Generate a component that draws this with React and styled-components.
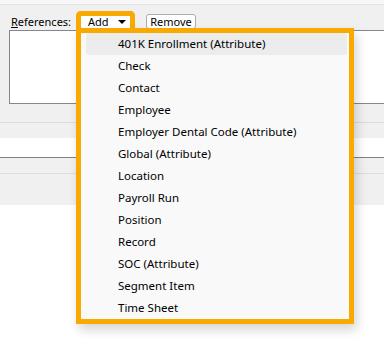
import React from "react";
import styled, { createGlobalStyle } from "styled-components";

const GlobalStyle = createGlobalStyle`
  html, body {
    margin: 0;
    padding: 0;
    background: #ffffff;
  }
  body {
    font-family: "Noto Sans", "Open Sans", sans-serif;
    font-size: 11.5px;
    color: #000;
    overflow: hidden;
  }
`;

const HIGHLIGHT = "#f9aa00";

const Page = styled.div`
  position: relative;
  width: 384px;
  height: 354px;
`;

const TopStrip = styled.div`
  height: 4px;
  background: #f7f7f7;
  border-bottom: 1px solid #e3e3e3;
`;

const Panel = styled.div`
  background: #f0f0f0;
  padding: 0 0 18px 9px;
  border-bottom: 1px solid #dcdcdc;
`;

const Toolbar = styled.div`
  display: flex;
  align-items: center;
  height: 17px;
  padding: 8px 0 0 2px;
  font-size: 11px;
`;

const Label = styled.span`
  width: 68px;
  u {
    text-decoration: underline;
    text-underline-offset: 1px;
  }
`;

const Button = styled.button`
  font: inherit;
  color: #000;
  width: ${(p) => p.$w}px;
  height: 15px;
  padding: 0 0 0 ${(p) => p.$pad}px;
  margin-left: ${(p) => p.$gap}px;
  background: #fff;
  border: 1px solid #adadad;
  border-radius: 3px;
  display: flex;
  align-items: center;
  justify-content: ${(p) => (p.$pad ? "flex-start" : "center")};
  gap: 9px;
  line-height: 1;
`;

const Caret = styled.span`
  width: 0;
  height: 0;
  border-left: 4px solid transparent;
  border-right: 4px solid transparent;
  border-top: 4px solid #000;
`;

const TextBox = styled.div`
  height: 72px;
  background: #fff;
  border: 1px solid #828790;
  border-right: none;
`;

const Band = styled.div`
  height: ${(p) => p.$h}px;
  background: ${(p) => (p.$white ? "#fff" : "#f0f0f0")};
  border-bottom: 1px solid ${(p) => p.$line || "transparent"};
`;

const AddFrame = styled.div`
  position: absolute;
  left: 76px;
  top: 11px;
  width: 49px;
  height: 14px;
  border: 5px solid ${HIGHLIGHT};
  border-bottom: none;
  border-radius: 5px 5px 0 0;
  pointer-events: none;
`;

const Menu = styled.ul`
  position: absolute;
  left: 76px;
  top: 28px;
  width: 268px;
  margin: 0;
  padding: 0;
  list-style: none;
  background: #f9f9f9;
  border: 5px solid ${HIGHLIGHT};
  box-shadow: 3px 6px 10px rgba(0, 0, 0, 0.16);
`;

const Item = styled.li`
  height: 20px;
  padding: 0 0 2px 32px;
  margin: 0 2px 0 5px;
  display: flex;
  align-items: center;
  border-radius: 3px;
  background: ${(p) => (p.$active ? "#ececec" : "transparent")};
`;

const items = [
  "401K Enrollment (Attribute)",
  "Check",
  "Contact",
  "Employee",
  "Employer Dental Code (Attribute)",
  "Global (Attribute)",
  "Location",
  "Payroll Run",
  "Position",
  "Record",
  "SOC (Attribute)",
  "Segment Item",
  "Time Sheet",
];

export default function App() {
  return (
    <Page>
      <GlobalStyle />
      <TopStrip />
      <Panel>
        <Toolbar>
          <Label>
            <u>R</u>eferences:
          </Label>
          <Button $gap={0} $w={54} $pad={8}>
            Add <Caret />
          </Button>
          <Button $gap={13} $w={50}>
            Remove
          </Button>
        </Toolbar>
        <TextBox />
      </Panel>
      <Band $h={14} />
      <Band $h={19} $white $line="#828282" />
      <Band $h={15} $line="#dddddd" />
      <Band $h={30} />
      <AddFrame />
      <Menu>
        {items.map((t, i) => (
          <Item key={t} $active={i === 0}>
            {t}
          </Item>
        ))}
      </Menu>
    </Page>
  );
}
